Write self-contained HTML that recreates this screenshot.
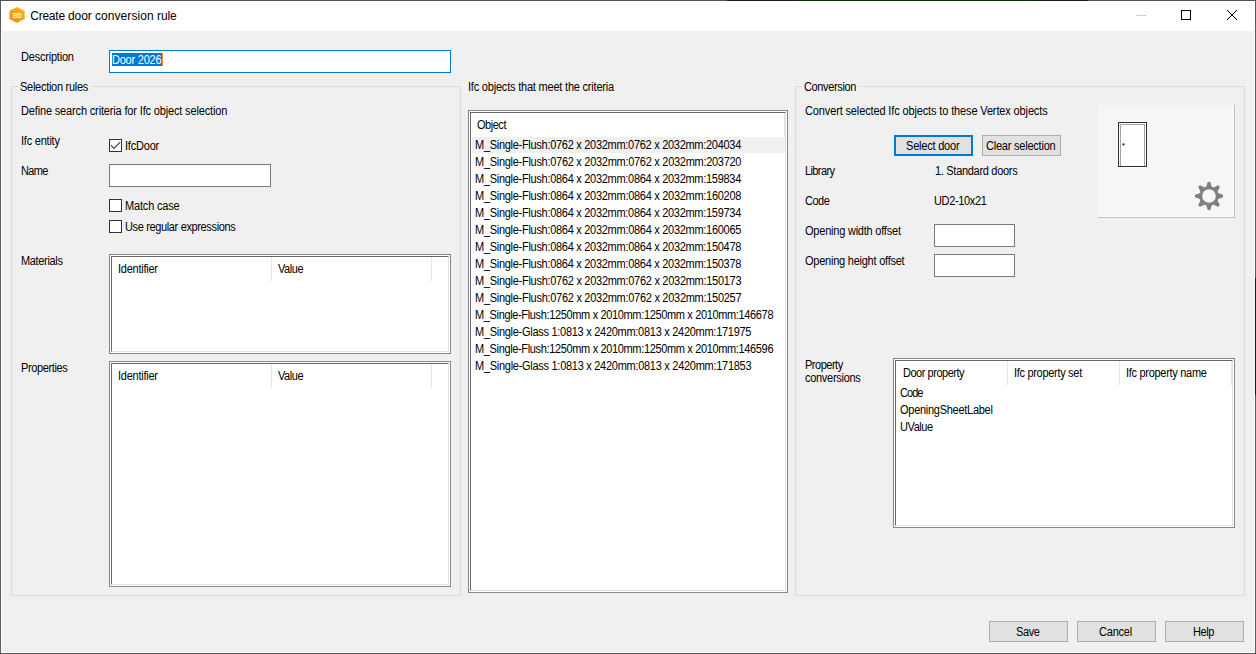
<!DOCTYPE html>
<html lang="en">
<head>
<meta charset="utf-8">
<title>Create door conversion rule</title>
<style>
html,body{margin:0;padding:0}
body{width:1256px;height:654px;overflow:hidden;position:relative;background:#f0f0f0;font-family:"Liberation Sans",sans-serif;font-size:11px;color:#000}
.a{position:absolute}
.t{position:absolute;font-size:12px;line-height:13px;white-space:nowrap;letter-spacing:-0.2px;transform:scaleX(.9167);transform-origin:0 0}
.gb{position:absolute;border:1px solid #dcdcdc;box-sizing:border-box}
.gl{position:absolute;background:#f0f0f0;height:13px}
.lv{position:absolute;box-sizing:border-box;border:1px solid #828790;background:#fff}
.lv i{position:absolute;left:1px;top:1px;right:1px;bottom:1px;border:1px solid;border-color:#696969 #e3e3e3 #e3e3e3 #696969}
.tb{position:absolute;box-sizing:border-box;border:1px solid #7a7a7a;background:#fff}
.cb{position:absolute;box-sizing:border-box;width:13px;height:13px;border:1px solid #333;background:#fff}
.btn{position:absolute;box-sizing:border-box;border:1px solid #adadad;background:#e1e1e1}
.hd{position:absolute;width:1px;background:#e5e5e5}
</style>
</head>
<body>
<!-- title bar -->
<div class="a" id="titlebar" style="left:1px;top:1px;width:1254px;height:30px;background:#fff"></div>
<svg class="a" style="left:8px;top:6px" width="18" height="18" viewBox="0 0 18 18">
<defs><linearGradient id="g" x1="0" y1="1" x2="1" y2="0"><stop offset="0" stop-color="#f68a1c"/><stop offset="1" stop-color="#fdb813"/></linearGradient></defs>
<path d="M9 1 L16.6 4.9 L16.6 13.1 L9 17 L1.4 13.1 L1.4 4.9 Z" fill="url(#g)"/>
<text x="4.9" y="12" font-family="Liberation Sans, sans-serif" font-size="7.6" font-weight="bold" fill="#fff" textLength="8.5" lengthAdjust="spacingAndGlyphs">BD</text>
</svg>
<div class="t" id="title" style="transform:none;left:30.2px;top:9px;font-size:12px;line-height:15px;letter-spacing:-0.08px"><span style="letter-spacing:-0.22px">Create </span>door <span style="letter-spacing:0.07px">conversion </span><span style="letter-spacing:-0.15px">rule</span></div>
<!-- window controls -->
<div class="a" style="left:1136px;top:15px;width:10px;height:1px;background:#cccccc"></div>
<div class="a" style="left:1181px;top:10px;width:10px;height:10px;box-sizing:border-box;border:1px solid #000"></div>
<svg class="a" style="left:1226px;top:9px" width="12" height="12" viewBox="0 0 12 12"><path d="M1 1 L11 11 M11 1 L1 11" stroke="#000" stroke-width="1" fill="none"/></svg>

<!-- description -->
<div class="t" style="left:20.68px;top:51px;letter-spacing:-0.231px">Description</div>
<div class="tb" style="left:109px;top:50px;width:342px;height:23px;border-color:#0078d7"></div>
<div class="a" style="left:112px;top:53px;width:50px;height:13px;background:#0078d7"></div>
<div class="a" style="left:162px;top:53px;width:1px;height:13px;background:#ff8728"></div>
<div class="t" style="left:112px;top:54px;color:#fff;-webkit-text-stroke:0;letter-spacing:-0.25px">Door 2026</div>

<!-- selection rules group -->
<div class="gb" style="left:11px;top:86px;width:450px;height:510px"></div>
<div class="gl" style="left:18px;top:80px;width:73px"></div>
<div class="t" style="left:19.87px;top:81px;letter-spacing:-0.295px">Selection rules</div>
<div class="t" style="left:21.39px;top:105px;letter-spacing:-0.168px">Define search criteria for Ifc object selection</div>
<div class="t" style="left:20.98px;top:135px;letter-spacing:-0.245px">Ifc entity</div>
<div class="cb" style="left:109px;top:139px"></div>
<svg class="a" style="left:109px;top:139px" width="13" height="13" viewBox="0 0 13 13"><path d="M2 6.4 L5 9.4 L11.2 3.2" stroke="#3a3a3a" stroke-width="1.05" fill="none"/></svg>
<div class="t" style="left:125.00px;top:140px;letter-spacing:-0.226px">IfcDoor</div>
<div class="t" style="left:21.18px;top:165px;letter-spacing:-0.693px">Name</div>
<div class="tb" style="left:109px;top:164px;width:162px;height:23px"></div>
<div class="cb" style="left:109px;top:199px"></div>
<div class="t" style="left:125.23px;top:200px;letter-spacing:-0.190px">Match case</div>
<div class="cb" style="left:109px;top:220px"></div>
<div class="t" style="left:125.23px;top:221px;letter-spacing:-0.390px">Use regular expressions</div>
<div class="t" style="left:20.95px;top:255px;letter-spacing:-0.374px">Materials</div>
<div class="lv" style="left:109px;top:254px;width:342px;height:100px"><i></i></div>
<div class="t" style="left:117.87px;top:263px;letter-spacing:-0.277px">Identifier</div>
<div class="t" style="left:278.22px;top:263px;letter-spacing:-0.491px">Value</div>
<div class="hd" style="left:271px;top:257px;height:24px"></div>
<div class="hd" style="left:431px;top:257px;height:24px"></div>
<div class="t" style="left:20.95px;top:362px;letter-spacing:-0.411px">Properties</div>
<div class="lv" style="left:109px;top:361px;width:342px;height:226px"><i></i></div>
<div class="t" style="left:117.87px;top:370px;letter-spacing:-0.277px">Identifier</div>
<div class="t" style="left:278.22px;top:370px;letter-spacing:-0.491px">Value</div>
<div class="hd" style="left:271px;top:364px;height:24px"></div>
<div class="hd" style="left:431px;top:364px;height:24px"></div>

<!-- middle -->
<div class="t" style="left:468.21px;top:81px;letter-spacing:-0.221px">Ifc objects that meet the criteria</div>
<div class="lv" style="left:468px;top:110px;width:320px;height:483px"><i></i></div>
<div class="t" style="left:477.13px;top:119px;letter-spacing:-0.514px">Object</div>
<div class="hd" style="left:784px;top:113px;height:24px"></div>
<div class="a" style="left:472px;top:137px;width:313px;height:16px;background:#f0f0f0"></div>
<div id="rows">
<div class="t" style="left:474.91px;top:139px;letter-spacing:-0.313px">M_Single-Flush:0762 x 2032mm:0762 x 2032mm:204034</div>
<div class="t" style="left:474.91px;top:156px;letter-spacing:-0.309px">M_Single-Flush:0762 x 2032mm:0762 x 2032mm:203720</div>
<div class="t" style="left:474.91px;top:173px;letter-spacing:-0.313px">M_Single-Flush:0864 x 2032mm:0864 x 2032mm:159834</div>
<div class="t" style="left:474.91px;top:190px;letter-spacing:-0.311px">M_Single-Flush:0864 x 2032mm:0864 x 2032mm:160208</div>
<div class="t" style="left:474.91px;top:207px;letter-spacing:-0.313px">M_Single-Flush:0864 x 2032mm:0864 x 2032mm:159734</div>
<div class="t" style="left:474.91px;top:224px;letter-spacing:-0.311px">M_Single-Flush:0864 x 2032mm:0864 x 2032mm:160065</div>
<div class="t" style="left:474.91px;top:241px;letter-spacing:-0.311px">M_Single-Flush:0864 x 2032mm:0864 x 2032mm:150478</div>
<div class="t" style="left:474.91px;top:258px;letter-spacing:-0.311px">M_Single-Flush:0864 x 2032mm:0864 x 2032mm:150378</div>
<div class="t" style="left:474.91px;top:275px;letter-spacing:-0.307px">M_Single-Flush:0762 x 2032mm:0762 x 2032mm:150173</div>
<div class="t" style="left:474.91px;top:292px;letter-spacing:-0.307px">M_Single-Flush:0762 x 2032mm:0762 x 2032mm:150257</div>
<div class="t" style="left:474.91px;top:309px;letter-spacing:-0.382px">M_Single-Flush:1250mm x 2010mm:1250mm x 2010mm:146678</div>
<div class="t" style="left:474.91px;top:326px;letter-spacing:-0.306px">M_Single-Glass 1:0813 x 2420mm:0813 x 2420mm:171975</div>
<div class="t" style="left:474.91px;top:343px;letter-spacing:-0.382px">M_Single-Flush:1250mm x 2010mm:1250mm x 2010mm:146596</div>
<div class="t" style="left:474.91px;top:360px;letter-spacing:-0.304px">M_Single-Glass 1:0813 x 2420mm:0813 x 2420mm:171853</div>
</div>

<!-- conversion group -->
<div class="gb" style="left:795px;top:86px;width:450px;height:510px"></div>
<div class="gl" style="left:802px;top:80px;width:57px"></div>
<div class="t" style="left:804px;top:81px;letter-spacing:-0.385px">Conversion</div>
<div class="t" style="left:804.58px;top:105px;letter-spacing:-0.146px">Convert selected Ifc objects to these Vertex objects</div>
<div class="btn" style="left:894px;top:135px;width:79px;height:21px;border:2px solid #0078d7"></div>
<div class="t" style="left:906.16px;top:140px;letter-spacing:-0.223px">Select door</div>
<div class="btn" style="left:982px;top:135px;width:79px;height:21px"></div>
<div class="t" style="left:986px;top:140px;letter-spacing:-0.241px">Clear selection</div>
<div class="t" style="left:805.30px;top:165px;letter-spacing:-0.671px">Library</div>
<div class="t" style="left:934.94px;top:165px;letter-spacing:-0.326px">1. Standard doors</div>
<div class="t" style="left:804.86px;top:195px;letter-spacing:-0.561px">Code</div>
<div class="t" style="left:934.32px;top:195px;letter-spacing:-0.379px">UD2-10x21</div>
<div class="t" style="left:804.85px;top:225px;letter-spacing:-0.238px">Opening width offset</div>
<div class="tb" style="left:934px;top:224px;width:81px;height:23px"></div>
<div class="t" style="left:804.85px;top:255px;letter-spacing:-0.257px">Opening height offset</div>
<div class="tb" style="left:934px;top:254px;width:81px;height:23px"></div>
<!-- preview panel -->
<div class="a" style="left:1098px;top:105px;width:137px;height:113px;background:#bfbfbf"></div>
<div class="a" style="left:1098px;top:105px;width:136px;height:112px;background:#fbfbfa"></div>
<div class="a" style="left:1098px;top:105px;width:135px;height:111px;background:#f6f6f4"></div>
<svg class="a" style="left:1116px;top:120px" width="34" height="50" viewBox="0 0 34 50">
<rect x="1.5" y="1.5" width="30" height="46" fill="none" stroke="#fbfbfa" stroke-width="1"/><rect x="2.5" y="2.5" width="28" height="44" fill="#fff" stroke="#2e2e2e" stroke-width="1"/>
<path d="M4.5 46 L4.5 4.5 L28.5 4.5 L28.5 46" fill="none" stroke="#8a8a8a" stroke-width="0.8"/>
<circle cx="7.5" cy="24.4" r="1.1" fill="#222"/>
</svg>
<svg class="a" id="gear" style="left:1193px;top:180px" width="32" height="32" viewBox="-16 -16 32 32">
<g fill="#808080">
<circle r="9.6"/>
<g id="tooth"><path d="M-3.6 -8.8 Q-2.1 -10 -1.75 -12.8 Q-1.5 -14.2 0 -14.2 Q1.5 -14.2 1.75 -12.8 Q2.1 -10 3.6 -8.8 Z"/></g>
<use href="#tooth" transform="rotate(45)"/><use href="#tooth" transform="rotate(90)"/><use href="#tooth" transform="rotate(135)"/>
<use href="#tooth" transform="rotate(180)"/><use href="#tooth" transform="rotate(225)"/><use href="#tooth" transform="rotate(270)"/><use href="#tooth" transform="rotate(315)"/>
</g>
<circle r="6.8" fill="#f6f6f4"/>
</svg>
<!-- property conversions -->
<div class="t" style="left:805.02px;top:359px;letter-spacing:-0.526px">Property</div>
<div class="t" style="left:805.27px;top:372px;letter-spacing:-0.315px">conversions</div>
<div class="lv" style="left:893px;top:358px;width:342px;height:170px"><i></i></div>
<div class="t" style="left:902.59px;top:367px;letter-spacing:-0.512px">Door property</div>
<div class="t" style="left:1014.07px;top:367px;letter-spacing:-0.332px">Ifc property set</div>
<div class="t" style="left:1126.07px;top:367px;letter-spacing:-0.320px">Ifc property name</div>
<div class="hd" style="left:1007px;top:361px;height:24px"></div>
<div class="hd" style="left:1119px;top:361px;height:24px"></div>
<div class="hd" style="left:1231px;top:361px;height:24px"></div>
<div class="t" style="left:900.41px;top:387px;letter-spacing:-1.026px">Code</div>
<div class="t" style="left:900.27px;top:404px;letter-spacing:-0.296px">OpeningSheetLabel</div>
<div class="t" style="left:900.17px;top:421px;letter-spacing:-0.453px">UValue</div>

<!-- bottom buttons -->
<div class="btn" style="left:989px;top:621px;width:79px;height:21px"></div>
<div class="t" style="left:1016.29px;top:626px;letter-spacing:-0.439px">Save</div>
<div class="btn" style="left:1077px;top:621px;width:79px;height:21px"></div>
<div class="t" style="left:1099.22px;top:626px;letter-spacing:-0.238px">Cancel</div>
<div class="btn" style="left:1165px;top:621px;width:79px;height:21px"></div>
<div class="t" style="left:1193px;top:626px;letter-spacing:-0.502px">Help</div>

<!-- window border -->
<div class="a" style="left:1px;top:31px;width:1px;height:622px;background:#fafafa"></div>
<div class="a" style="left:1254px;top:31px;width:1px;height:622px;background:#fafafa"></div>
<div class="a" style="left:1px;top:652px;width:1254px;height:1px;background:#fafafa"></div>
<div class="a" style="left:0;top:0;width:1256px;height:1px;background:#545454"></div>
<div class="a" style="left:727px;top:0;width:361px;height:1px;background:#1c1c1c"></div>
<div class="a" style="left:793px;top:0;width:245px;height:1px;background:#0b2e0b"></div>
<div class="a" style="left:0;top:0;width:1px;height:654px;background:#5a5a5a"></div>
<div class="a" style="left:1255px;top:0;width:1px;height:654px;background:#5a5a5a"></div>
<div class="a" style="left:1255px;top:278px;width:1px;height:117px;background:#151515"></div>
<div class="a" style="left:0;top:653px;width:1256px;height:1px;background:#5e5e5c"></div>
</body>
</html>
